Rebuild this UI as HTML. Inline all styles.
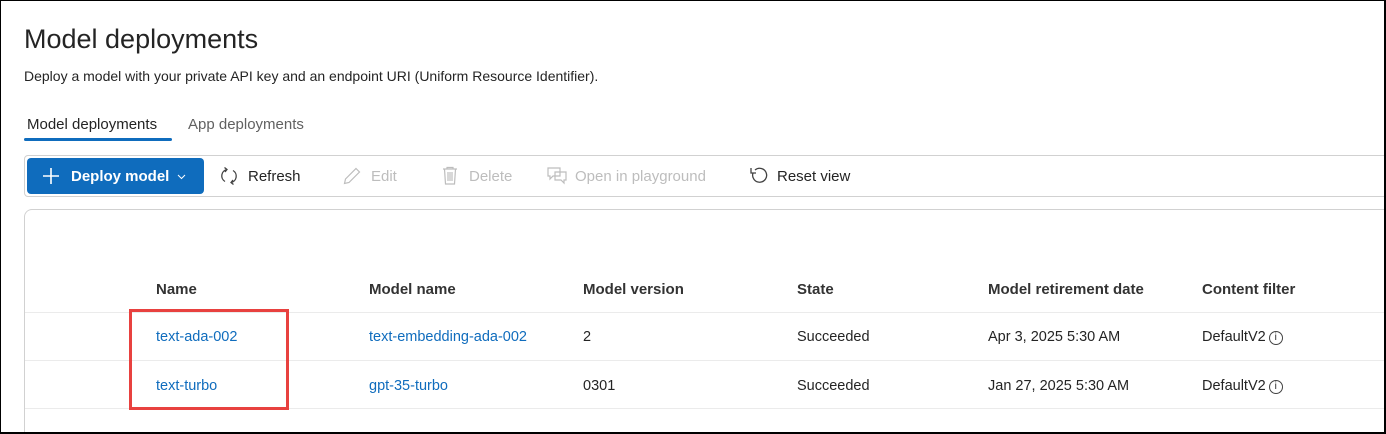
<!DOCTYPE html>
<html style="width:1386px;height:434px;overflow:hidden"><head><style>
*{box-sizing:border-box;margin:0;padding:0}
body{width:1386px;height:434px;overflow:hidden;background:#fff;font-family:"Liberation Sans",sans-serif;color:#242424;position:relative}
.frame{position:absolute;left:0;top:0;width:1386px;height:434px;border:1px solid #000;border-right-width:2px;border-bottom-width:2px}
.a{position:absolute;white-space:nowrap}
h1{position:absolute;left:24px;top:24px;font-size:27px;font-weight:400;color:#242424}
.sub{left:24px;top:68px;font-size:14px}
.tab{top:116px;font-size:15px}
.tb{position:absolute;left:24px;top:155px;width:1400px;height:42px;border:1px solid #d1d1d1;border-radius:4px}
.btn{position:absolute;left:27px;top:158px;width:177px;height:36px;background:#0f6cbd;border-radius:4px;color:#fff;font-weight:bold;font-size:15px}
.ti{top:168px;font-size:15px}
.dis{color:#bdbdbd}
.card{position:absolute;left:24px;top:209px;width:1400px;height:224px;border:1px solid #d1d1d1;border-bottom:none;border-radius:8px 8px 0 0}
.hd{top:281px;font-size:15px;font-weight:bold;color:#333}
.c{font-size:14.5px}
.lk{color:#0f6cbd}
.line{position:absolute;left:25px;width:1361px;height:1px;background:#ebebeb}
.info{display:inline-block;width:14px;height:14px;border:1px solid #424242;border-radius:50%;font-size:10px;text-align:center;line-height:12px;vertical-align:1px;margin-left:3px}
</style></head><body>
<h1>Model deployments</h1>
<div class="a sub">Deploy a model with your private API key and an endpoint URI (Uniform Resource Identifier).</div>
<div class="a tab" style="left:27px;color:#242424">Model deployments</div>
<div class="a" style="left:24px;top:138px;width:148px;height:3px;background:#0f6cbd;border-radius:2px"></div>
<div class="a tab" style="left:188px;color:#616161">App deployments</div>
<div class="tb"></div>
<div class="btn">
<svg class="a" style="left:14px;top:8px" width="20" height="20" viewBox="0 0 20 20"><path d="M10 2v16M2 10h16" stroke="#fff" stroke-width="1.6"/></svg>
<span class="a" style="left:44px;top:10px">Deploy model</span>
<svg class="a" style="left:150px;top:16px" width="9" height="6" viewBox="0 0 9 6"><path d="M1 1l3.5 3.5L8 1" stroke="#fff" fill="none"/></svg>
</div>
<svg class="a" style="left:219px;top:166px" width="20" height="20" viewBox="0 0 20 20" fill="none" stroke="#424242" stroke-width="1.3"><path d="M8 3.5A6.5 6.5 0 0 0 6 15.5M12 16.5A6.5 6.5 0 0 0 14 4.5M5.5 1.5L8 3.5 6 6M14.5 18.5L12 16.5 14 14"/></svg>
<div class="a ti" style="left:248px">Refresh</div>
<svg class="a dis" style="left:342px;top:166px" width="20" height="20" viewBox="0 0 20 20" fill="none" stroke="#bdbdbd" stroke-width="1.2"><path d="M14 2.5l3.5 3.5L7 16.5 2.5 17.5 3.5 13z"/></svg>
<div class="a ti dis" style="left:371px">Edit</div>
<svg class="a" style="left:441px;top:166px" width="18" height="20" viewBox="0 0 18 20" fill="none" stroke="#bdbdbd" stroke-width="1.2"><path d="M2 3h14M6 3V1.5h6V3M3.5 3l1 15h9l1-15M7 6v9M9 6v9M11 6v9"/></svg>
<div class="a ti dis" style="left:469px">Delete</div>
<svg class="a" style="left:546px;top:166px" width="22" height="20" viewBox="0 0 22 20" fill="none" stroke="#bdbdbd" stroke-width="1.2"><path d="M2 2h12v8H7l-3 3v-3H2zM9 6h11v8h-2v3l-3-3H9z"/></svg>
<div class="a ti dis" style="left:575px">Open in playground</div>
<svg class="a" style="left:749px;top:166px" width="20" height="20" viewBox="0 0 20 20" fill="none" stroke="#424242" stroke-width="1.3"><path d="M4 7A7 7 0 1 0 6 4M2 2v5h5"/></svg>
<div class="a ti" style="left:777px">Reset view</div>
<div class="card"></div>
<div class="a hd" style="left:156px">Name</div>
<div class="a hd" style="left:369px">Model name</div>
<div class="a hd" style="left:583px">Model version</div>
<div class="a hd" style="left:797px">State</div>
<div class="a hd" style="left:988px">Model retirement date</div>
<div class="a hd" style="left:1202px">Content filter</div>
<div class="line" style="top:312px"></div>
<div class="line" style="top:360px"></div>
<div class="line" style="top:408px"></div>
<div class="a c lk" style="left:156px;top:329px">text-ada-002</div>
<div class="a c lk" style="left:369px;top:329px">text-embedding-ada-002</div>
<div class="a c" style="left:583px;top:329px">2</div>
<div class="a c" style="left:797px;top:329px">Succeeded</div>
<div class="a c" style="left:988px;top:329px">Apr 3, 2025 5:30 AM</div>
<div class="a c" style="left:1202px;top:329px">DefaultV2<span class="info">i</span></div>
<div class="a c lk" style="left:156px;top:378px">text-turbo</div>
<div class="a c lk" style="left:369px;top:378px">gpt-35-turbo</div>
<div class="a c" style="left:583px;top:378px">0301</div>
<div class="a c" style="left:797px;top:378px">Succeeded</div>
<div class="a c" style="left:988px;top:378px">Jan 27, 2025 5:30 AM</div>
<div class="a c" style="left:1202px;top:378px">DefaultV2<span class="info">i</span></div>
<div class="a" style="left:129px;top:309px;width:160px;height:101px;border:3px solid #e8413f"></div>
<div class="frame"></div>
</body></html>
